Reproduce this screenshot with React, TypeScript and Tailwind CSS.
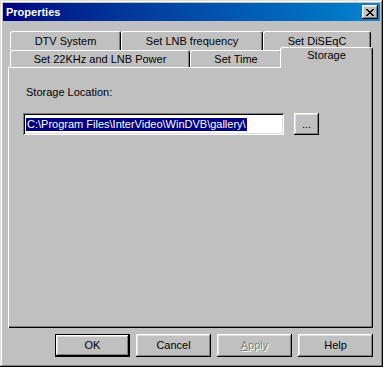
import type { ReactNode } from 'react'

// Win98-style "Properties" dialog, Storage tab selected

const raised =
  'shadow-[inset_-1px_-1px_#000,inset_1px_1px_#fff,inset_-2px_-2px_#808080,inset_2px_2px_#dfdfdf]'

function CloseGlyph() {
  const rows = ['xx....xx', '.xx..xx.', '..xxxx..', '...xx...', '..xxxx..', '.xx..xx.', 'xx....xx']
  return (
    <svg width="8" height="7" viewBox="0 0 8 7" shapeRendering="crispEdges">
      {rows.flatMap((r, y) =>
        r.split('').map((c, x) => (c === 'x' ? <rect key={`${x}-${y}`} x={x} y={y} width="1" height="1" fill="#000" /> : null)),
      )}
    </svg>
  )
}

function Tab({ label, w }: { label: string; w: string }) {
  return (
    <div
      className={`${w} h-full flex items-center justify-center rounded-t-[3px] border-t border-l border-r border-t-white border-l-white border-r-black shadow-[inset_-1px_0_#808080] bg-[#c0c0c0] text-black`}
    >
      {label}
    </div>
  )
}

function Button({ children, def, disabled }: { children: ReactNode; def?: boolean; disabled?: boolean }) {
  return (
    <div
      className={`w-[75px] h-[23px] flex items-center justify-center ${
        def
          ? 'shadow-[inset_0_0_0_1px_#000,inset_-2px_-2px_#000,inset_2px_2px_#fff,inset_-3px_-3px_#808080,inset_3px_3px_#dfdfdf]'
          : raised
      } ${disabled ? 'text-[#808080] [text-shadow:1px_1px_#fff]' : 'text-black'}`}
    >
      {children}
    </div>
  )
}

export default function App() {
  return (
    <div
      className="w-[383px] h-[367px] p-[3px] flex flex-col bg-[#c0c0c0] text-[11px] leading-[13px] shadow-[inset_-1px_-1px_#000,inset_1px_1px_#dfdfdf,inset_-2px_-2px_#808080,inset_2px_2px_#fff]"
      style={{ fontFamily: '"Liberation Sans", Arial, sans-serif' }}
    >
      {/* Title bar */}
      <div className="h-[18px] flex items-center pl-[3px] pr-[2px] bg-gradient-to-r from-[#000080] to-[#1084d0]">
        <span className="text-white font-bold text-[11px]">Properties</span>
        <div className={`ml-auto w-[16px] h-[14px] flex items-center justify-center bg-[#c0c0c0] ${raised}`}>
          <CloseGlyph />
        </div>
      </div>

      {/* Tab control */}
      <div className="mt-[10px] ml-[5px] w-[365px] flex flex-col">
        <div className="h-[19px] flex pl-[2px]">
          <Tab label="DTV System" w="w-[111px]" />
          <Tab label="Set LNB frequency" w="w-[142px]" />
          <Tab label="Set DiSEqC" w="w-[108px]" />
        </div>
        <div className="h-[17px] flex items-end pl-[2px]">
          <Tab label="Set 22KHz and LNB Power" w="w-[180px]" />
          <Tab label="Set Time" w="w-[92px]" />
          <div className="relative z-10 w-[93px] h-[21px] -mx-[2px] -mb-[1px] pb-[5px] flex items-center justify-center rounded-t-[3px] border-t border-l border-r border-t-white border-l-white border-r-black shadow-[inset_-1px_0_#808080] bg-[#c0c0c0]">
            Storage
          </div>
        </div>
        <div className="h-[261px] flex flex-col pt-[19px] pl-[18px] shadow-[inset_1px_1px_#fff,inset_-1px_-1px_#000,inset_-2px_-2px_#808080]">
          <span>Storage Location:</span>
          <div className="mt-[14px] -ml-[3px] flex items-center">
            <div className="w-[261px] h-[22px] flex items-center pl-[3px] bg-white shadow-[inset_1px_1px_#808080,inset_-1px_-1px_#fff,inset_2px_2px_#000,inset_-2px_-2px_#dfdfdf]">
              <span className="bg-[#000080] text-white px-[1px]">C:\Program Files\InterVideo\WinDVB\gallery\</span>
            </div>
            <div className={`ml-[10px] w-[25px] h-[22px] flex items-center justify-center ${raised}`}>...</div>
          </div>
        </div>
      </div>

      {/* Dialog buttons */}
      <div className="mt-[6px] flex gap-[6px] pl-[52px]">
        <Button def>OK</Button>
        <Button>Cancel</Button>
        <Button disabled>
          <span>
            <span className="underline">A</span>pply
          </span>
        </Button>
        <Button>Help</Button>
      </div>
    </div>
  )
}
